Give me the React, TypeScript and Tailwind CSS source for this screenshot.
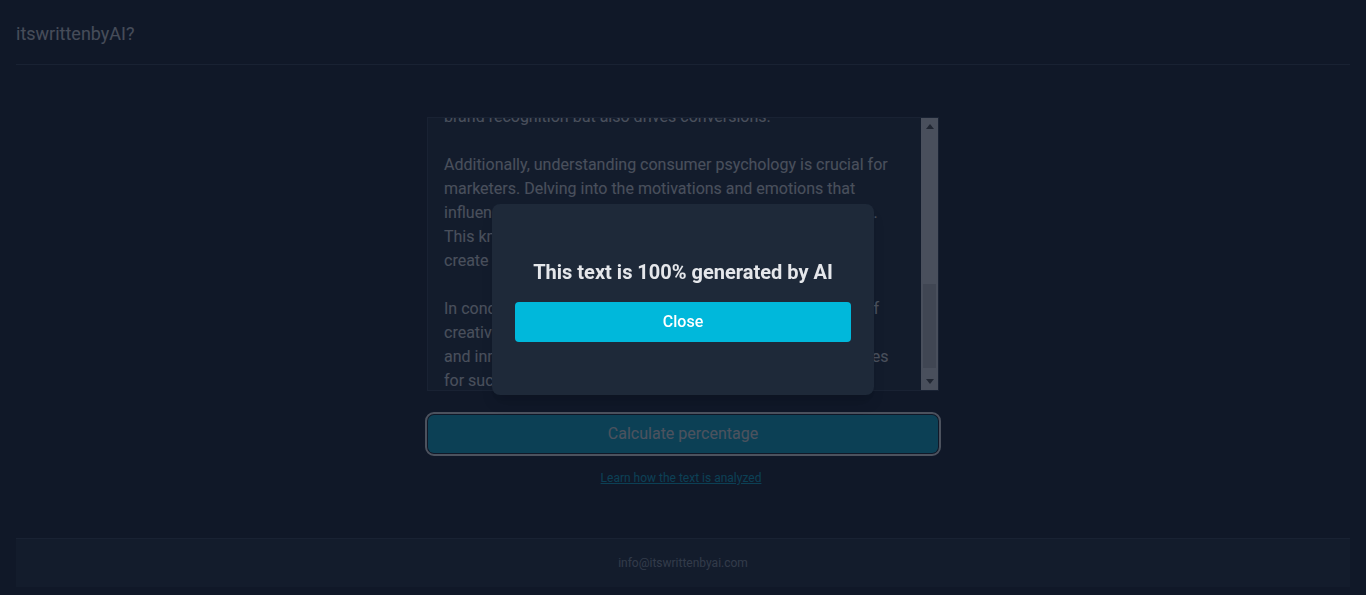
import { useEffect, useRef } from "react";

const sample = [
  "In today's fast-paced digital world, marketing has evolved into a",
  "dynamic and multifaceted discipline. Businesses must constantly",
  "adapt to changing consumer behaviors, emerging technologies, and",
  "shifting market trends in order to stay competitive.",
  "",
  "One of the most significant developments in recent years is the",
  "rise of social media marketing. Platforms such as Instagram,",
  "Facebook, and TikTok have become essential tools for reaching",
  "target audiences and building meaningful relationships with",
  "customers.",
  "",
  "Content marketing has also emerged as a powerful strategy.",
  "By creating valuable, relevant, and consistent content, brands",
  "can attract and retain a clearly defined audience. High-quality",
  "content establishes authority and fosters trust.",
  "",
  "Furthermore, data analytics plays a vital role in shaping",
  "marketing decisions. By leveraging insights from customer data,",
  "companies can personalize their campaigns and optimize their",
  "budgets. A well-executed, data-driven strategy not only enhances",
  "brand recognition but also drives conversions.",
  "",
  "Additionally, understanding consumer psychology is crucial for",
  "marketers. Delving into the motivations and emotions that",
  "influence purchasing decisions results in sharper campaigns.",
  "This knowledge allows brands to tailor their offerings and",
  "create experiences that truly resonate with their audience.",
  "",
  "In conclusion, effective marketing requires a creative blend of",
  "creativity, insight, and adaptability. Brands that embrace",
  "and innovate with evolving technology will position themselves",
  "for success in an ever-changing marketplace.",
].join("\n");

// classic scrollbar, drawn since the page hides native ones
function Scrollbar() {
  return (
    <div className="w-[17px] h-full flex flex-col bg-[#f3f3f5]">
      <div className="h-[17px] flex items-center justify-center">
        <svg width="8" height="5" viewBox="0 0 8 5">
          <polygon points="4,0 8,5 0,5" fill="#505050" />
        </svg>
      </div>
      <div className="flex-1 flex flex-col justify-end pb-[5px]">
        <div className="h-[84px] mx-[2px] bg-[#cfcfd1]" />
      </div>
      <div className="h-[17px] flex items-center justify-center">
        <svg width="8" height="5" viewBox="0 0 8 5">
          <polygon points="0,0 8,0 4,5" fill="#505050" />
        </svg>
      </div>
    </div>
  );
}

export default function App() {
  const boxRef = useRef<HTMLTextAreaElement>(null);

  useEffect(() => {
    const el = boxRef.current;
    if (el) el.scrollTop = el.scrollHeight - el.clientHeight - 19;
  }, []);

  return (
    <div className="min-h-screen flex flex-col bg-gray-900 font-['Roboto','Liberation_Sans',sans-serif]">
      <header className="mx-4 h-[65px] pt-1 flex items-center border-b border-gray-700">
        <span className="text-lg text-gray-200">itswrittenbyAI?</span>
      </header>

      <main className="flex flex-col items-center pt-[52px]">
        <div className="w-[512px] h-[274px] flex bg-gray-800 border border-gray-700">
          <textarea
            ref={boxRef}
            readOnly
            defaultValue={sample}
            spellCheck={false}
            className="flex-1 h-full resize-none bg-transparent px-4 py-4 text-base leading-6 text-gray-100 outline-none [scrollbar-width:none]"
          />
          <Scrollbar />
        </div>
        <button className="mt-6 w-[510px] h-[38px] rounded-md bg-cyan-500 text-base text-white outline-2 outline-offset-1 outline-white">
          Calculate percentage
        </button>
        <a href="#" className="mt-[17px] mr-1 text-xs leading-4 text-cyan-500 underline">
          Learn how the text is analyzed
        </a>
      </main>

      <footer className="mt-auto mx-4 mb-2 h-[49px] flex items-center justify-center bg-gray-800 border-t border-gray-700">
        <span className="text-xs text-gray-400">info@itswrittenbyai.com</span>
      </footer>

      {/* backdrop + result dialog */}
      <div className="fixed inset-0 z-40 bg-gray-900/75" />
      <div className="fixed inset-0 z-50 flex items-center justify-center">
        <div className="mt-1 w-[382px] rounded-lg bg-gray-800 px-[23px] pt-[54px] pb-[53px] flex flex-col items-center shadow-lg">
          <h2 className="text-xl leading-7 font-bold text-gray-200">This text is 100% generated by AI</h2>
          <button className="mt-4 w-full h-10 rounded bg-cyan-500 text-base font-medium text-white">Close</button>
        </div>
      </div>
    </div>
  );
}
